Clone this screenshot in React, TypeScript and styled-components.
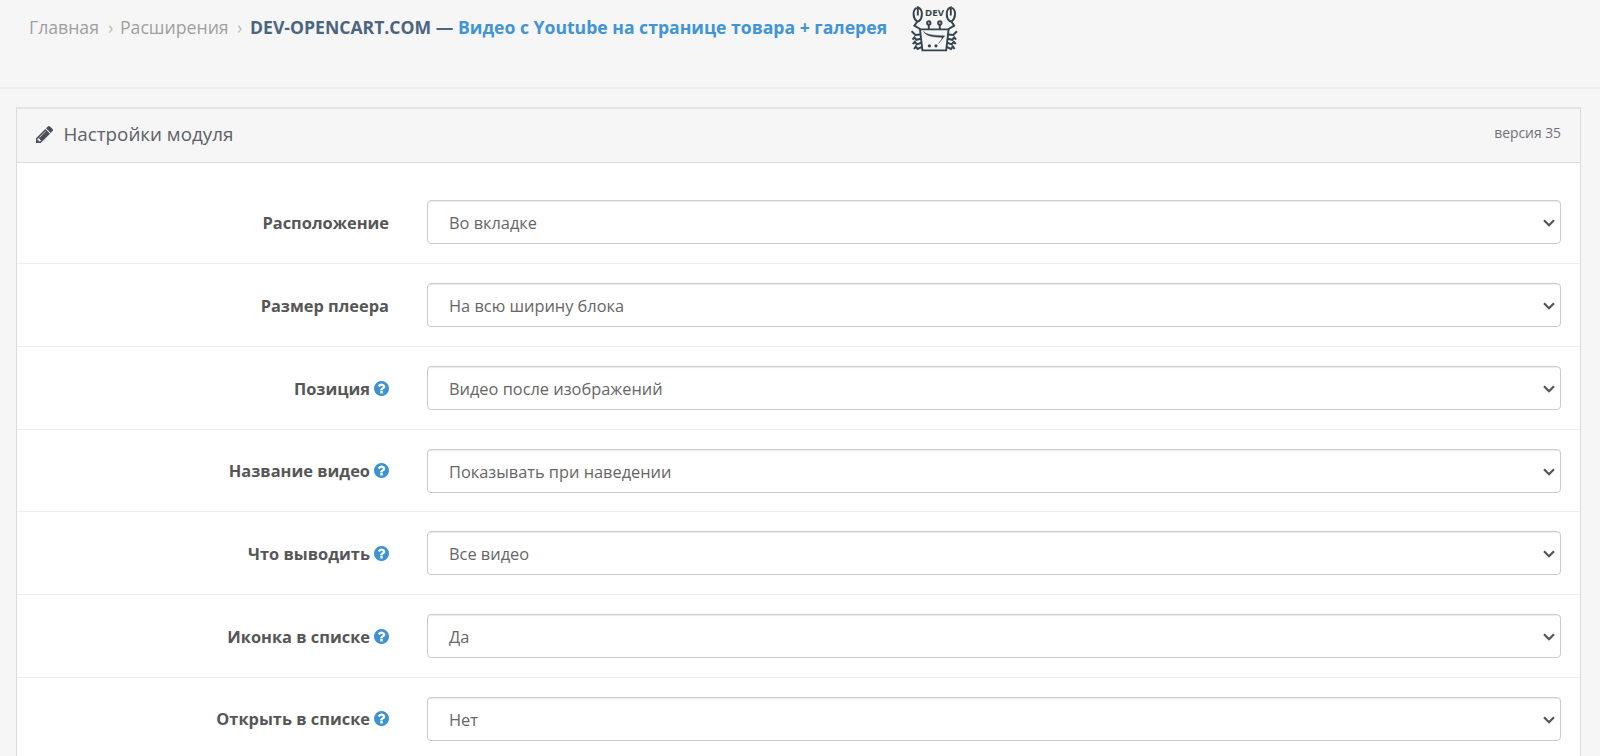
import React from "react";
import styled, { createGlobalStyle } from "styled-components";

const GlobalStyle = createGlobalStyle`
  *, *::before, *::after { box-sizing: border-box; }
  html, body { margin: 0; height: 100%; overflow: hidden; }
  body {
    background: #f6f6f6;
    color: #565656;
    font-family: "Open Sans", "Noto Sans", sans-serif;
    font-size: 16.5px;
  }
`;

const Page = styled.div`
  display: flex;
  flex-direction: column;
  height: 756px;
  overflow: hidden;
`;

const PageHeader = styled.header`
  display: flex;
  align-items: flex-start;
  height: 89px;
  flex: none;
  padding: 4px 0 0 29px;
  border-bottom: 2px solid #eeeeee;
`;

const Breadcrumb = styled.ol`
  display: flex;
  align-items: center;
  height: 46px;
  margin: 0;
  padding: 0;
  list-style: none;
  font-size: 17.65px;
  line-height: 46px;
  white-space: nowrap;
`;

const Crumb = styled.li<{ $width: number }>`
  display: flex;
  width: ${(p) => p.$width}px;
  color: #a0a0a0;
`;

const Separator = styled.span`
  width: 10px;
  margin-right: 2px;
  color: #bdbdbd;
  font-size: 18px;
`;

const Title = styled.li`
  width: 637px;
  margin-left: 1px;
  color: #4b6580;
  font-size: 17.6px;
  font-weight: 700;
`;

const TitleLink = styled.a`
  color: #4094d7;
`;

const Logo = styled.svg`
  flex: none;
  width: 48px;
  height: 48px;
  margin: 2px 0 0 24px;
`;

const Panel = styled.main`
  display: flex;
  flex-direction: column;
  flex: 1;
  margin: 18px 19px 0 16px;
  border: 1px solid #dcdcdc;
  border-top: 2px solid #e4e4e4;
  border-bottom: 0;
  background: #fff;
  min-height: 0;
`;

const PanelHeading = styled.div`
  display: flex;
  align-items: center;
  flex: none;
  height: 54px;
  padding: 0 19px 3px 18.5px;
  background: #f6f6f6;
  border-bottom: 1px solid #dcdcdc;
`;

const PanelTitle = styled.h3`
  flex: 1;
  margin: 0 0 0 11px;
  color: #606068;
  font-size: 18.8px;
  font-weight: 400;
`;

const Version = styled.span`
  padding-bottom: 3px;
  color: #70707a;
  font-size: 13.85px;
`;

const Form = styled.form`
  flex: none;
  padding-top: 17.6px;
`;

const Row = styled.div`
  display: flex;
  align-items: center;
  height: 82.7px;
  & + & { border-top: 1px solid #eeeeee; }
`;

const Label = styled.label`
  display: flex;
  align-items: center;
  justify-content: flex-end;
  gap: 5px;
  width: 372px;
  margin-right: 38px;
  padding-top: 0.4px;
  color: #565656;
  font-size: 16.4px;
  font-weight: 700;
  white-space: nowrap;
`;

const Select = styled.div`
  display: flex;
  align-items: center;
  justify-content: space-between;
  width: 1134px;
  height: 44px;
  padding: 2px 5px 0 21px;
  border: 1px solid #cccccc;
  border-radius: 4px;
  background: #fff;
  box-shadow: inset 0 1px 1px rgba(0, 0, 0, 0.08);
  color: #666666;
  font-size: 16.38px;
`;

const HelpSvg = styled.svg`
  width: 15px;
  height: 15px;
  margin: 0 0 0 -1px;
  fill: #3d92d4;
`;

const PencilSvg = styled.svg`
  width: 17px;
  height: 17px;
  fill: #4c4d5a;
`;

const HelpIcon = () => (
  <HelpSvg viewBox="128 128 1536 1536">
    <path d="M1024 1376v-192q0-14-9-23t-23-9h-192q-14 0-23 9t-9 23v192q0 14 9 23t23 9h192q14 0 23-9t9-23zm256-672q0-88-55.5-163t-138.5-116-170-41q-243 0-371 213-15 24 8 42l132 100q7 6 19 6 16 0 25-12 53-68 86-92 34-24 86-24 48 0 85.5 26t37.5 59q0 38-20 61t-68 45q-63 28-115.5 86.5t-52.5 125.5v36q0 14 9 23t23 9h192q14 0 23-9t9-23q0-19 21.5-49.5t54.5-49.5q32-18 49-28.5t46-35 44.5-48 28-60.5 12.5-81zm384 192q0 209-103 385.5t-279.5 279.5-385.5 103-385.5-103-279.5-279.5-103-385.5 103-385.5 279.5-279.5 385.5-103 385.5 103 279.5 279.5 103 385.5z" />
  </HelpSvg>
);

const PencilIcon = () => (
  <PencilSvg viewBox="0 149 1515 1515">
    <path d="M363 1536l91-91-235-235-91 91v107h128v128h107zm523-928q0-22-22-22-10 0-17 7l-542 542q-7 7-7 17 0 22 22 22 10 0 17-7l542-542q7-7 7-17zm-54-192l416 416-832 832h-416v-416zm683 96q0 53-37 90l-166 166-416-416 166-165q36-38 90-38 53 0 91 38l235 234q37 39 37 91z" />
  </PencilSvg>
);

const Chevron = () => (
  <svg width="12" height="8" viewBox="0 0 12 8" fill="none" stroke="#555" strokeWidth="2.2">
    <path d="M1 1.2L6 6.2L11 1.2" />
  </svg>
);

const CrabHalf = () => (
  <g>
    <path d="M5.6 1.8C1.4 4.4 1.6 11.6 5.8 15.2H7.8C12 11.6 11.8 4.4 8 1.8L6.8 1.4V9.4" />
    <path d="M6.4 15.4L3.4 19.6L9.4 23.2" />
    <path strokeWidth="2" d="M.6 25.2L4.4 29L9.4 28.4M1.6 33.6L3.4 31.4L5.4 33.8L9.8 32.8M1.8 38.2L3.8 35.8L6 38.4L10.2 36.8M3 43L4.8 40.4L6.6 43L11 40.8" />
    <circle cx="17.8" cy="17" r="1.7" />
    <path d="M17.8 19V23.4" />
  </g>
);

const CrabLogo = () => (
  <Logo viewBox="0 0 48 48" fill="none" stroke="#36424c" strokeWidth="1.9">
    <CrabHalf />
    <g transform="translate(46.6 0) scale(-1 1)">
      <CrabHalf />
    </g>
    <path d="M9 23.4H37.6L35.2 44.4H11.4Z" />
    <path d="M12.4 25.4C16 29 22 29.2 33.8 29.8L27.6 37.4C31.6 32.4 32.4 31.4 28.4 31.2C19 30.8 15.4 29.4 12.4 25.4Z" fill="#36424c" strokeWidth=".4" />
    <g fill="#36424c" stroke="none">
      <circle cx="18.4" cy="39.8" r="1.6" />
      <circle cx="25" cy="39.8" r="1.6" />
      <text x="14.1" y="10.1" textLength="19" lengthAdjust="spacingAndGlyphs" fontFamily="Open Sans, sans-serif" fontSize="8.6" fontWeight="700">DEV</text>
    </g>
  </Logo>
);

const settings = [
  { label: "Расположение", value: "Во вкладке", help: false },
  { label: "Размер плеера", value: "На всю ширину блока", help: false },
  { label: "Позиция", value: "Видео после изображений", help: true },
  { label: "Название видео", value: "Показывать при наведении", help: true },
  { label: "Что выводить", value: "Все видео", help: true },
  { label: "Иконка в списке", value: "Да", help: true },
  { label: "Открыть в списке", value: "Нет", help: true },
];

export default function App() {
  return (
    <Page>
      <GlobalStyle />
      <PageHeader>
        <Breadcrumb>
          <Crumb $width={79}>Главная</Crumb>
          <Separator>›</Separator>
          <Crumb $width={117}>Расширения</Crumb>
          <Separator>›</Separator>
          <Title>
            DEV-OPENCART.COM — <TitleLink>Видео с Youtube на странице товара + галерея</TitleLink>
          </Title>
        </Breadcrumb>
        <CrabLogo />
      </PageHeader>
      <Panel>
        <PanelHeading>
          <PencilIcon />
          <PanelTitle>Настройки модуля</PanelTitle>
          <Version>версия 35</Version>
        </PanelHeading>
        <Form>
          {settings.map((s) => (
            <Row key={s.label}>
              <Label>
                {s.label}
                {s.help && <HelpIcon />}
              </Label>
              <Select>
                {s.value}
                <Chevron />
              </Select>
            </Row>
          ))}
        </Form>
      </Panel>
    </Page>
  );
}
